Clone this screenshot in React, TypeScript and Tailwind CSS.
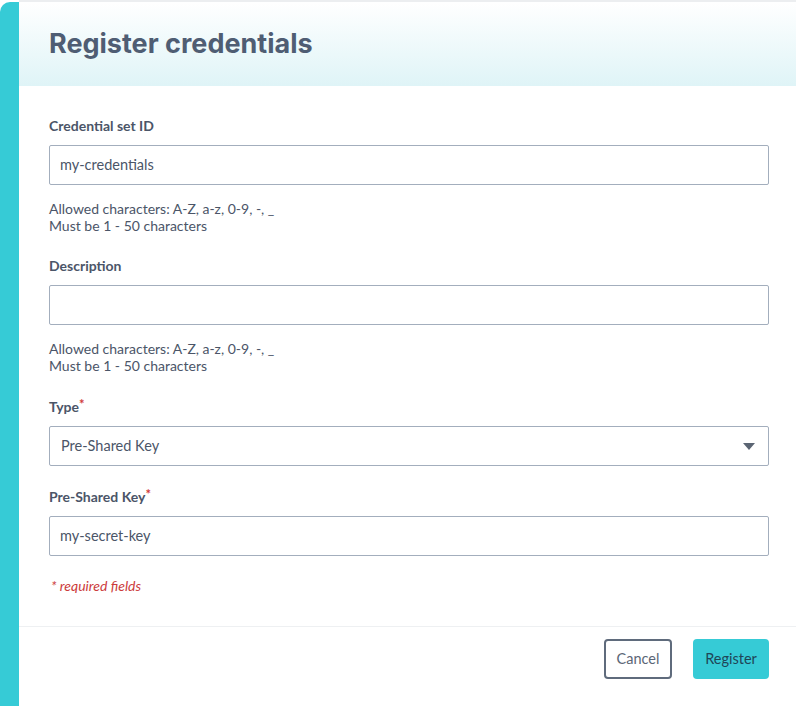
import React from "react";

function Label({ text, required }: { text: string; required?: boolean }) {
  return (
    <div className="text-[14px] font-bold text-[#4b5568] leading-[17px]">
      {text}
      {required && <span className="text-[#d03a3a] align-top text-[13px] relative -top-[2px]">*</span>}
    </div>
  );
}

function Help() {
  return (
    <div className="mt-[15px] text-[14px] leading-[17px] text-[#4b5568]">
      <div>Allowed characters: A-Z, a-z, 0-9, -, _</div>
      <div>Must be 1 - 50 characters</div>
    </div>
  );
}

function Field({ value }: { value: string }) {
  return (
    <div className="mt-[11px] h-[40px] border border-[#a3aebd] rounded-[2px] flex items-center px-[10px] text-[14.5px] text-[#4b5568]">
      {value}
    </div>
  );
}

export default function App() {
  return (
    <div
      className="w-[796px] h-[706px] bg-white flex overflow-hidden"
      style={{ fontFamily: "Lato, 'Noto Sans', sans-serif" }}
    >
      <div className="w-[19px] mt-[2px] bg-[#36cbd6] rounded-tl-[10px] shrink-0" />
      <div className="flex-1 flex flex-col border-t-2 border-[#eceef0]">
        <div className="h-[84px] bg-gradient-to-b from-white to-[#dff4f7] flex items-center pl-[30px]">
          <h1
            className="text-[27px] font-bold text-[#4f5d73]"
            style={{ fontFamily: "Inter, sans-serif" }}
          >
            Register credentials
          </h1>
        </div>
        <div className="px-[30px] pr-[27px] pt-[31px]">
          <Label text="Credential set ID" />
          <Field value="my-credentials" />
          <Help />
          <div className="mt-[23px]">
            <Label text="Description" />
            <Field value="" />
            <Help />
          </div>
          <div className="mt-[24px]">
            <Label text="Type" required />
            <div className="mt-[11px] h-[40px] border border-[#a3aebd] rounded-[2px] flex items-center justify-between pl-[11px] pr-[13px] text-[14.5px] text-[#4b5568]">
              <span>Pre-Shared Key</span>
              <svg width="12" height="7" viewBox="0 0 12 7">
                <path d="M0 0 L12 0 L6 7 Z" fill="#5b6573" />
              </svg>
            </div>
          </div>
          <div className="mt-[22px]">
            <Label text="Pre-Shared Key" required />
            <Field value="my-secret-key" />
          </div>
          <div className="mt-[19px] text-[14px] italic text-[#cc3b3b] pl-[2px]">* required fields</div>
        </div>
        <div className="mt-[30px] border-t border-[#eef0f2] flex justify-end gap-[21px] pr-[27px] pt-[12px]">
          <button className="h-[40px] w-[68px] border-2 border-[#5f6b7c] rounded-[4px] text-[14.5px] text-[#5b6676] bg-white">
            Cancel
          </button>
          <button className="h-[40px] w-[76px] rounded-[4px] bg-[#36cbd6] text-[14.5px] text-[#1f4658]">
            Register
          </button>
        </div>
      </div>
    </div>
  );
}
